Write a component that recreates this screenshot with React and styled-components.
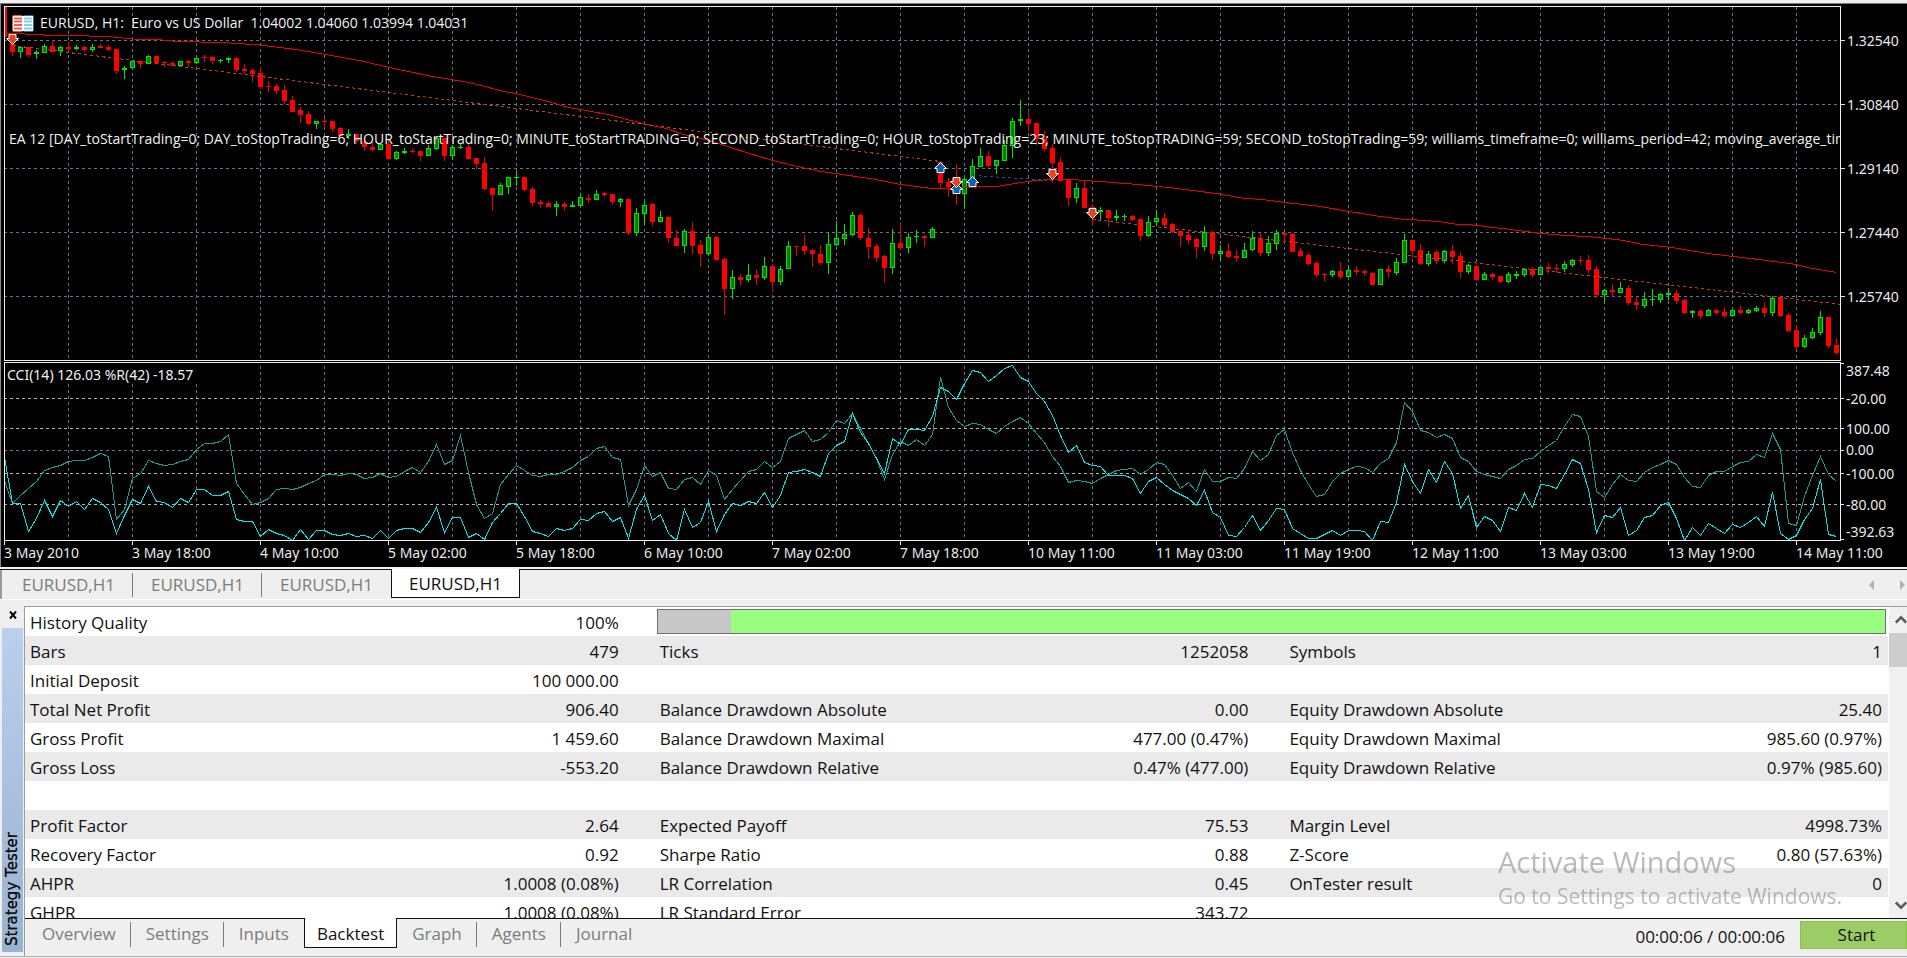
import React from "react";
import styled, { createGlobalStyle, css } from "styled-components";

const UI_FONT = '"Open Sans", "Noto Sans", sans-serif';
const CHART_FONT = '"Noto Sans", "Open Sans", sans-serif';

const GlobalStyle = createGlobalStyle`
  * { box-sizing: border-box; }
  body { margin: 0; background: #efefef; overflow: hidden; }
`;

/* ---------- chart data ---------- */

const STEP = 8;
const SUB = 3;

/* colour, high, body top, body bottom, low, in thirds of a pixel */
const CANDLES = `R 18 18 110 112|R 108 133 155 167|G 141 142 155 173|R 141 141 165 171|G 150 157 163 176|G 132 139 158 160|R 120 139 155 157|G 137 142 153 167
R 126 141 147 152|G 135 141 146 150|R 137 141 150 155|G 132 142 149 155|R 132 138 143 145|R 135 141 149 153|R 147 147 212 222|G 198 203 211 236
G 182 184 203 206|R 182 184 191 203|G 165 169 191 193|R 168 168 189 190|R 182 187 190 200|R 183 189 195 198|G 182 184 197 198|R 179 183 189 201
G 170 173 188 191|R 165 171 174 185|R 168 171 183 191|G 177 180 183 188|G 171 175 180 188|R 171 174 210 215|R 192 206 213 221|R 207 210 221 245
R 201 219 261 266|R 244 258 261 275|R 252 258 272 281|R 255 270 303 311|R 288 300 335 336|R 321 330 345 369|R 333 342 372 374|G 363 364 371 386
R 354 363 366 377|R 363 363 387 395|R 381 384 408 411|G 387 402 408 417|R 402 402 423 431|R 422 425 441 453|R 425 441 450 453|G 430 433 449 451
R 419 432 477 479|G 453 457 476 480|G 444 453 458 461|R 444 453 456 459|R 453 453 467 482|G 435 445 467 468|G 411 415 446 450|R 413 414 467 482
G 435 441 467 476|G 432 440 443 446|R 432 441 477 479|R 474 474 492 507|R 471 489 567 570|R 564 564 585 633|G 549 555 584 585|G 531 532 560 581
G 516 531 534 557|R 531 531 570 572|R 562 567 609 618|R 600 606 611 624|R 603 609 621 621|G 603 613 620 648|R 605 611 621 633|G 603 614 620 621
G 579 591 617 618|R 582 594 600 609|G 570 583 599 600|R 575 578 584 591|R 582 582 605 614|G 594 598 605 621|R 597 597 699 706|G 624 640 698 707
G 603 616 641 668|R 609 612 666 677|G 633 652 665 666|R 648 651 713 729|R 690 714 738 738|G 687 693 737 759|R 666 693 738 762|R 720 735 762 801
G 702 712 761 764|R 708 711 779 783|R 774 777 867 945|G 810 832 866 897|R 822 831 840 857|G 792 826 839 845|R 807 825 834 855|G 771 799 833 839
R 792 798 845 875|G 798 808 845 855|G 723 739 806 806|R 738 738 741 768|R 705 738 753 765|R 747 750 762 801|R 735 762 789 795|G 699 733 788 822
G 663 714 734 738|G 672 703 716 735|G 636 646 704 707|R 639 645 713 720|R 684 714 741 777|R 732 738 773 785|R 765 768 803 849|G 687 730 803 822
R 666 729 743 747|G 699 712 743 759|G 690 708 712 729|R 705 708 713 741|G 682 688 713 714|R 483 486 549 566|R 534 546 560 591|R 492 534 580 615
G 534 538 581 627|G 477 499 536 540|G 444 468 500 501|R 453 468 497 501|G 480 481 497 521|G 420 436 482 483|G 354 364 437 474|G 300 358 364 378
R 330 357 372 392|R 369 369 417 435|R 393 414 447 453|R 432 444 489 549|R 471 486 543 546|R 540 540 594 618|G 549 564 593 609|R 541 564 624 624
R 612 621 654 678|G 621 630 635 660|R 630 630 654 681|G 630 649 653 662|G 642 648 651 662|R 645 648 660 663|R 657 657 707 723|G 648 667 707 711
G 630 655 667 678|R 639 654 675 683|R 669 672 696 699|R 693 693 707 741|R 690 705 719 731|R 714 717 741 774|G 678 697 740 753|R 693 696 761 779
G 735 754 761 782|R 729 753 771 774|R 750 767 774 786|G 730 751 773 774|G 693 714 751 753|R 699 714 759 768|G 708 730 758 768|G 690 699 731 750
R 696 699 704 728|R 699 702 755 756|R 744 753 767 771|R 759 765 791 797|R 783 789 825 831|R 819 822 825 843|G 810 814 824 830|R 786 813 831 837
G 798 811 830 832|R 798 810 815 825|R 810 813 819 828|R 816 819 855 855|G 807 808 854 855|R 795 807 816 833|G 774 787 818 825|G 702 721 788 790
R 720 720 752 773|R 732 750 792 795|G 753 763 791 797|R 750 756 782 792|G 750 754 782 789|R 735 753 770 792|R 756 768 815 833|G 792 796 815 822
R 795 798 839 843|G 816 823 839 840|R 820 822 831 839|R 827 828 846 849|G 816 823 845 849|G 813 822 827 837|G 804 808 824 830|R 801 807 825 831
G 801 802 824 825|R 789 801 806 818|R 792 803 806 815|G 783 793 806 815|G 777 781 794 801|R 768 780 783 795|R 765 780 809 822|R 798 807 885 893
G 867 871 884 906|R 852 870 876 891|G 846 865 878 879|R 855 864 909 915|R 891 906 915 930|G 876 898 917 923|G 867 897 900 917|G 879 882 899 909
G 864 880 885 899|R 870 879 903 911|R 897 900 939 942|G 930 934 938 954|R 927 933 947 957|G 927 931 947 948|R 928 930 939 945|R 921 936 947 953
G 930 931 947 950|R 915 930 939 945|G 927 931 938 942|G 918 924 933 936|R 906 924 939 951|G 888 895 938 948|R 887 891 947 951|R 939 945 993 996
R 978 990 1041 1050|G 1006 1015 1040 1044|G 984 997 1014 1018|G 933 952 998 1005|R 951 951 1038 1044|R 1014 1035 1059 1065`
  .split(/[|\n]/)
  .map((row) => {
    const [tone, ...levels] = row.trim().split(" ");
    const [high, top, bottom, low] = levels.map((v) => Math.round(Number(v) / SUB));
    return { tone, high, top, bottom, low };
  });

/* one reading per bar, in thirds of a pixel */
const CCI = [
  380, 444, 420, 400, 377, 345, 335, 331, 319, 316, 316, 307, 295, 304, 493, 462, 370, 355, 316, 325, 331, 328, 319, 313,
  283, 265, 265, 257, 238, 385, 417, 447, 441, 428, 401, 398, 401, 397, 385, 376, 358, 358, 361, 355, 358, 368, 365, 355,
  367, 364, 347, 337, 352, 319, 268, 327, 314, 241, 350, 447, 490, 475, 388, 357, 331, 344, 360, 364, 358, 358, 349, 337,
  314, 304, 278, 273, 306, 311, 451, 403, 329, 363, 350, 399, 403, 371, 367, 388, 344, 360, 432, 401, 375, 347, 343, 317,
  336, 317, 250, 238, 226, 257, 252, 231, 194, 203, 175, 220, 265, 310, 373, 298, 258, 271, 253, 271, 238, 67, 157, 196,
  213, 203, 206, 222, 235, 214, 198, 187, 204, 235, 260, 303, 333, 382, 376, 379, 384, 368, 358, 346, 341, 338, 357, 341,
  320, 328, 361, 400, 382, 408, 341, 379, 379, 365, 370, 338, 289, 316, 298, 241, 221, 290, 344, 388, 424, 417, 377, 355,
  343, 334, 335, 352, 325, 310, 262, 140, 169, 225, 232, 247, 238, 248, 306, 317, 349, 358, 362, 370, 343, 330, 311, 310,
  289, 270, 256, 212, 178, 182, 243, 409, 426, 388, 358, 376, 379, 352, 337, 327, 316, 328, 367, 394, 397, 361, 349, 349,
  334, 320, 319, 298, 306, 235, 283, 505, 511, 424, 361, 302, 358, 377,
];

const WILLIAMS = [
  316, 445, 445, 529, 489, 434, 483, 436, 453, 439, 462, 430, 441, 461, 535, 481, 433, 445, 392, 438, 442, 456, 430, 441,
  403, 403, 421, 421, 407, 493, 498, 499, 542, 523, 535, 541, 555, 523, 553, 526, 526, 538, 541, 535, 544, 541, 550, 526,
  549, 526, 520, 520, 532, 501, 455, 532, 487, 487, 545, 535, 552, 502, 473, 445, 445, 484, 528, 535, 544, 520, 526, 519,
  493, 496, 473, 469, 498, 486, 550, 463, 419, 496, 476, 535, 555, 463, 516, 502, 437, 528, 478, 445, 451, 439, 445, 412,
  456, 421, 350, 347, 341, 352, 363, 295, 271, 257, 173, 231, 265, 310, 355, 250, 267, 223, 223, 226, 184, 95, 108, 132,
  85, 46, 50, 79, 60, 38, 31, 66, 79, 115, 139, 179, 239, 291, 269, 321, 331, 332, 361, 361, 361, 370, 415, 378,
  367, 388, 406, 418, 428, 451, 406, 472, 487, 541, 544, 517, 479, 526, 496, 460, 463, 520, 535, 550, 550, 538, 526, 541,
  526, 526, 529, 555, 499, 502, 442, 328, 379, 413, 343, 381, 317, 355, 460, 421, 517, 484, 495, 529, 457, 465, 415, 457,
  388, 391, 400, 358, 313, 323, 403, 532, 479, 487, 457, 541, 526, 487, 481, 451, 442, 490, 555, 517, 541, 505, 520, 535,
  508, 517, 502, 484, 514, 412, 535, 552, 541, 493, 460, 373, 538, 544,
];

const MOVING_AVERAGE = [
  [20, 100], [75, 102], [150, 106], [240, 107], [340, 111], [400, 117], [485, 120], [530, 124], [675, 128], [780, 135],
  [890, 149], [975, 163], [1090, 184], [1165, 202], [1300, 230], [1350, 238], [1410, 248], [1510, 274], [1549, 281],
  [1650, 306], [1700, 321], [1740, 328], [1830, 345], [1930, 371], [2000, 386], [2050, 403], [2125, 421], [2200, 445],
  [2240, 458], [2317, 481], [2380, 497], [2460, 514], [2510, 521], [2625, 538], [2700, 553], [2790, 565], [2850, 565],
  [2910, 562], [3000, 558], [3060, 548], [3110, 541], [3150, 539], [3220, 539], [3320, 546], [3420, 554], [3470, 559],
  [3520, 564], [3660, 582], [3725, 594], [3790, 599], [3853, 607], [3950, 618], [4045, 634], [4130, 648], [4210, 658],
  [4250, 660], [4320, 665], [4370, 673], [4420, 675], [4520, 687], [4620, 700], [4680, 705], [4780, 711], [4870, 721],
  [4920, 732], [5020, 743], [5120, 760], [5280, 779], [5380, 792], [5430, 804], [5508, 817],
];

const VERTICALS = Array.from({ length: 28 }, (_, i) => 68 + i * 64);
const PRICES = ["1.32540", "1.30840", "1.29140", "1.27440", "1.25740"];
const DEALS = [
  { x: 12, y: 39, side: "sell" },
  { x: 940, y: 167, side: "buy" },
  { x: 956, y: 188, side: "buy" },
  { x: 956, y: 182, side: "sell" },
  { x: 972, y: 181, side: "buy" },
  { x: 1052, y: 174, side: "sell" },
  { x: 1092, y: 213, side: "sell" },
];
const LEVELS = [
  { y: 398, tone: "#b4b4b4" },
  { y: 428, tone: "#b4b4b4" },
  { y: 450, tone: "#62748a" },
  { y: 473, tone: "#b4b4b4" },
  { y: 504, tone: "#b4b4b4" },
];
const SCALE = [
  { y: 371, tick: 363, text: "387.48" },
  { y: 399, tick: 398, text: "-20.00" },
  { y: 429, tick: 428, text: "100.00" },
  { y: 450, tick: 450, text: "0.00" },
  { y: 474, tick: 473, text: "-100.00" },
  { y: 505, tick: 504, text: "-80.00" },
  { y: 532, tick: 539, text: "-392.63" },
];
const TIMES = [
  "3 May 2010", "3 May 18:00", "4 May 10:00", "5 May 02:00", "5 May 18:00", "6 May 10:00", "7 May 02:00", "7 May 18:00",
  "10 May 11:00", "11 May 03:00", "11 May 19:00", "12 May 11:00", "13 May 03:00", "13 May 19:00", "14 May 11:00",
];
const EA_PARAMETERS =
  "EA 12 [DAY_toStartTrading=0; DAY_toStopTrading=6; HOUR_toStartTrading=0; MINUTE_toStartTRADING=0; SECOND_toStartTrading=0; HOUR_toStopTrading=23; MINUTE_toStopTRADING=59; SECOND_toStopTrading=59; williams_timeframe=0; williams_period=42; moving_average_timeframe=0";

/* ---------- chart ---------- */

const ChartWindow = styled.section`
  flex: none;
  display: grid;
  grid-template-columns: minmax(0, 1fr) 66px;
  grid-template-rows: 355px 1px 179px 26px;
  margin-top: 3px;
  padding-top: 2px;
  padding-left: 4px;
  background: #000;
  border-top: 1px solid #7c7c7c;
  border-bottom: 2px solid #f4f4f4;
  box-shadow: inset 1px 0 #8a8a8a;
  overflow: hidden;
`;

const Pane = styled.div`
  position: relative;
  min-width: 0;
  overflow: hidden;
  border: 1px solid #f0f0f0;
  ${(p) => p.$lower && css`grid-row: 3;`}
`;

const Canvas = styled.svg`
  display: block;
  width: 100%;
  height: 100%;
`;

const Axis = styled.svg`
  display: block;
  width: 100%;
  height: 100%;
  overflow: visible;
  grid-row: ${(p) => p.$row};
  grid-column: ${(p) => (p.$wide ? "1 / 3" : "2")};
  font-family: ${CHART_FONT};
  font-size: 14px;
  fill: #e8e8e8;
`;

const Caption = styled.div`
  position: absolute;
  top: ${(p) => p.$top}px;
  left: ${(p) => p.$left}px;
  display: flex;
  align-items: center;
  gap: 6px;
  color: #f0f0f0;
  font-family: ${(p) => (p.$narrow ? UI_FONT : CHART_FONT)};
  font-size: 14px;
  line-height: 20px;
  white-space: pre;
`;

const GRID = "#62748a";

function Candle({ x, tone, high, top, bottom, low }) {
  const up = tone === "G";
  const height = Math.max(bottom - top, 1);
  return (
    <g>
      <rect x={x} y={high} width="1" height={Math.max(low - high, 1)} fill={up ? "#00e600" : "#e60000"} />
      <rect x={x - 2} y={top} width="5" height={height} fill={up ? "#00e600" : "#ff0000"} />
      {up && height > 2 && <rect x={x - 1} y={top + 1} width="3" height={height - 2} fill="#008000" />}
    </g>
  );
}

function Deal({ x, y, side }) {
  return (
    <path
      transform={`translate(${x + 0.5} ${y + 0.5})${side === "buy" ? " scale(1 -1)" : ""}`}
      d="M-3.5 -5H3.5V-1H6L0 5L-6 -1H-3.5Z"
      fill={side === "buy" ? "#0a64b4" : "#e8441f"}
      stroke="#fff"
      strokeWidth="1"
    />
  );
}

function QuoteIcon() {
  return (
    <svg width="22" height="17" viewBox="0 0 22 17" aria-hidden="true">
      <rect width="11" height="17" rx="2" fill="#e5504a" />
      <rect x="11" width="11" height="17" rx="2" fill="#1a72bd" />
      <rect x="1" y="1" width="10" height="15" fill="#fff" />
      <rect x="11" y="1" width="10" height="15" fill="#fff" />
      <path d="M2 3.5H10M2 6.5H10M2 10H10M2 13.5H10" stroke="#ee5a50" strokeWidth="2" />
      <path d="M12 3.5H20M12 6.5H20M12 10H20M12 13.5H20" stroke="#8fc8f5" strokeWidth="2" />
    </svg>
  );
}

const toPoints = (values) => values.map((v, i) => `${i === 0 ? 5 : 4.5 + i * STEP},${Math.round(v / SUB) + 355.5}`).join(" ");

function PriceChart() {
  return (
    <Pane>
      <Canvas role="img" aria-label="EURUSD H1 candlestick chart">
        <g transform="translate(-5 -7)" shapeRendering="crispEdges" fill="none">
          {VERTICALS.map((x) => (
            <line key={x} x1={x + 0.5} x2={x + 0.5} y1="7" y2="358" stroke={GRID} strokeDasharray="3 3" />
          ))}
          {PRICES.map((p, i) => (
            <line key={p} x1="4" x2="4000" y1={40.5 + i * 64} y2={40.5 + i * 64} stroke={GRID} strokeDasharray="3 3" />
          ))}
          {CANDLES.map((c, i) => (
            <Candle key={i} x={4 + i * STEP} {...c} />
          ))}
          <polyline points={MOVING_AVERAGE.map(([x, y]) => `${x / SUB},${y / SUB}`).join(" ")} stroke="#e60000" />
          <path d="M12.5 45.5L940.5 161.5M1092.5 219.5L1842 304.5" stroke="#c23c14" strokeDasharray="3 3" />
          <path d="M972.5 175.5L1052.5 180.5" stroke="#0a5aa0" strokeDasharray="3 3" />
          <g shapeRendering="auto">
            {DEALS.map((d, i) => (
              <Deal key={i} {...d} />
            ))}
          </g>
        </g>
      </Canvas>
      <Caption $top={6} $left={7} $narrow>
        <QuoteIcon />
        <span>EURUSD, H1:  Euro vs US Dollar  1.04002 1.04060 1.03994 1.04031</span>
      </Caption>
      <Caption $top={122} $left={4} $narrow>{EA_PARAMETERS}</Caption>
    </Pane>
  );
}

function IndicatorChart() {
  return (
    <Pane $lower>
      <Canvas role="img" aria-label="CCI and Williams percent range">
        <g transform="translate(-5 -363)" shapeRendering="crispEdges" fill="none">
          {VERTICALS.map((x) => (
            <line key={x} x1={x + 0.5} x2={x + 0.5} y1={x < 200 ? 384 : 366} y2="538" stroke={GRID} strokeDasharray="3 3" />
          ))}
          {LEVELS.map((l) => (
            <line key={l.y} x1="4" x2="4000" y1={l.y + 0.5} y2={l.y + 0.5} stroke={l.tone} strokeDasharray="3 3" />
          ))}
          <polyline points={toPoints(CCI)} stroke="#209890" />
          <polyline points={toPoints(WILLIAMS)} stroke="#00e6e6" />
        </g>
      </Canvas>
      <Caption $top={2} $left={2}>CCI(14) 126.03 %R(42) -18.57</Caption>
    </Pane>
  );
}

function Charts() {
  return (
    <ChartWindow>
      <PriceChart />
      <Axis $row={1}>
        {PRICES.map((p, i) => (
          <g key={p}>
            <rect x="-1" y={34 + i * 64} width="5" height="1" />
            <text x="6" y={40 + i * 64}>{p}</text>
          </g>
        ))}
      </Axis>
      <IndicatorChart />
      <Axis $row={3}>
        {SCALE.map((s) => (
          <g key={s.text}>
            <rect x="-1" y={s.tick - 362} width="4" height="1" />
            <text x="5" y={s.y - 357}>{s.text}</text>
          </g>
        ))}
      </Axis>
      <Axis $row={4} $wide>
        {TIMES.map((t, i) => (
          <g key={t}>
            <rect x={i * 128} y="0" width="1" height="4" />
            <text x={i * 128} y="17">{t}</text>
          </g>
        ))}
      </Axis>
    </ChartWindow>
  );
}

/* ---------- tabs ---------- */

const ChartTabs = styled.nav`
  flex: none;
  display: flex;
  height: 30px;
  padding-left: 4px;
  padding-right: 2px;
  border-top: 1px solid #111;
  box-shadow: inset 2px 0 #9a9a9a, 0 1px #fff;
`;

const Tab = styled.button`
  display: flex;
  align-items: center;
  justify-content: center;
  position: relative;
  height: ${(p) => p.$height}px;
  margin-top: -1px;
  padding: 2px 15px 0;
  border: 0;
  background: transparent;
  color: #7c7c7c;
  font-family: ${UI_FONT};
  font-size: 17px;
  line-height: 22px;

  &:not(:last-of-type)::after {
    content: "";
    position: absolute;
    right: 0;
    top: 4px;
    bottom: 1px;
    width: 1px;
    background: #7c7c7c;
  }

  ${(p) => p.$wide && css`width: 129px;`}
  ${(p) =>
    p.$active &&
    css`
      padding: 2px 12px 0;
      background: #fff;
      color: #111;
      border: 1px solid #111;
      border-top: 0;
      &&::after { display: none; }
    `}
  ${(p) => p.$plain && css`&&::after { display: none; }`}
`;

const TabArrows = styled.div`
  display: flex;
  align-items: center;
  gap: 26px;
  margin-left: auto;
`;

const ArrowButton = styled.button`
  display: flex;
  padding: 0;
  border: 0;
  background: transparent;
`;

const CHART_TABS = ["EURUSD,H1", "EURUSD,H1", "EURUSD,H1", "EURUSD,H1"];

/* ---------- strategy tester ---------- */

const Tester = styled.section`
  flex: 1;
  min-height: 0;
  display: flex;
  margin-top: 7px;
  margin-bottom: 1px;
  border-bottom: 1px solid #b0b0b0;
`;

const SideBar = styled.div`
  flex: none;
  display: flex;
  flex-direction: column;
  width: 24px;
  padding: 0 1px 4px 2px;
`;

const CloseButton = styled.button`
  display: flex;
  align-items: center;
  justify-content: center;
  height: 22px;
  padding: 0 0 4px;
  border: 0;
  background: transparent;
`;

const SideTitle = styled.h2`
  flex: 1;
  margin: 0;
  padding-top: 6px;
  writing-mode: vertical-rl;
  transform: rotate(180deg);
  background: linear-gradient(#98b2d2, #b9d0ee);
  color: #111;
  font-family: "DejaVu Sans", "Noto Sans", sans-serif;
  font-size: 15px;
  font-weight: 400;
  line-height: 21px;
  text-shadow: 0 0 #111;
`;

const TesterMain = styled.div`
  flex: 1;
  min-width: 0;
  display: flex;
  flex-direction: column;
  border-left: 1px solid #9c9c9c;
  border-top: 1px solid #9c9c9c;
`;

const Report = styled.div`
  flex: 1;
  min-height: 0;
  display: flex;
  background: #fff;
`;

const ReportView = styled.div`
  flex: 1;
  min-width: 0;
  overflow: hidden;
  padding-right: 1px;
`;

const Table = styled.table`
  width: 100%;
  table-layout: fixed;
  border-collapse: collapse;
  color: #111;
  font-family: ${UI_FONT};
  font-size: 17px;
  line-height: 27px;
`;

const Row = styled.tr`
  height: 29px;
  background: ${(p) => (p.$shaded ? "#eaeaea" : "#fff")};
`;

const Label = styled.th`
  padding: 2px 0 0 5px;
  font-weight: 400;
  text-align: left;
  white-space: nowrap;
`;

const Value = styled.td`
  padding: 2px ${(p) => (p.$last ? 6 : 36)}px 0 0;
  text-align: right;
  white-space: nowrap;
`;

const ProgressCell = styled.td`
  padding: 0 2px;
`;

const Progress = styled.div`
  height: 25px;
  border: 1px solid #6e6e6e;
  background: #98ff80;
`;

const ProgressMissing = styled.div`
  width: 6%;
  height: 100%;
  background: #c8c8c8;
`;

const ScrollBar = styled.div`
  flex: none;
  display: flex;
  flex-direction: column;
  width: 18px;
  background: #f0f0f0;
`;

const ScrollButton = styled.button`
  display: flex;
  align-items: center;
  height: 26px;
  padding: 0 0 0 6px;
  border: 0;
  background: transparent;
  overflow: hidden;
  margin-top: ${(p) => (p.$end ? "auto" : "0")};
`;

const ScrollThumb = styled.div`
  height: 34px;
  background: #cdcdcd;
`;

const Footer = styled.div`
  flex: none;
  display: flex;
  height: 38px;
  padding-left: 2px;
  border-top: 1px solid #111;
`;

const Elapsed = styled.output`
  margin: 6px 15px 0 auto;
  color: #111;
  font-family: ${UI_FONT};
  font-size: 17px;
  line-height: 24px;
`;

const StartButton = styled.button`
  width: 107px;
  height: 28px;
  margin-top: 2px;
  padding: 0 0 0 6px;
  border: 1px solid #8bc34a;
  background: #9ccc65;
  color: #111;
  font-family: ${UI_FONT};
  font-size: 17px;
  line-height: 22px;
`;

const Watermark = styled.div`
  position: fixed;
  right: 66px;
  bottom: 46px;
  width: 343px;
  color: rgba(120, 120, 120, 0.5);
  font-family: ${UI_FONT};
  pointer-events: none;
  white-space: nowrap;
`;

const WatermarkTitle = styled.div`
  font-size: 29px;
  line-height: 36px;
`;

const WatermarkText = styled.div`
  font-size: 21px;
  line-height: 32px;
`;

const ROWS = [
  ["Bars", "479", "Ticks", "1252058", "Symbols", "1"],
  ["Initial Deposit", "100 000.00", "", "", "", ""],
  ["Total Net Profit", "906.40", "Balance Drawdown Absolute", "0.00", "Equity Drawdown Absolute", "25.40"],
  ["Gross Profit", "1 459.60", "Balance Drawdown Maximal", "477.00 (0.47%)", "Equity Drawdown Maximal", "985.60 (0.97%)"],
  ["Gross Loss", "-553.20", "Balance Drawdown Relative", "0.47% (477.00)", "Equity Drawdown Relative", "0.97% (985.60)"],
  ["", "", "", "", "", ""],
  ["Profit Factor", "2.64", "Expected Payoff", "75.53", "Margin Level", "4998.73%"],
  ["Recovery Factor", "0.92", "Sharpe Ratio", "0.88", "Z-Score", "0.80 (57.63%)"],
  ["AHPR", "1.0008 (0.08%)", "LR Correlation", "0.45", "OnTester result", "0"],
  ["GHPR", "1.0008 (0.08%)", "LR Standard Error", "343.72", "", ""],
];

const TESTER_TABS = ["Overview", "Settings", "Inputs", "Backtest", "Graph", "Agents", "Journal"];

const Page = styled.main`
  display: flex;
  flex-direction: column;
  height: 100vh;
  background: #efefef;
`;

function Chevron({ down }) {
  return (
    <svg width="14" height="10" viewBox="0 0 14 10" aria-hidden="true">
      <path d={down ? "M1 2L7 8L13 2" : "M1 8L7 2L13 8"} fill="none" stroke="#5c5c5c" strokeWidth="3" />
    </svg>
  );
}

function StrategyTester() {
  return (
    <Tester>
      <SideBar>
        <CloseButton aria-label="Close">
          <svg width="8" height="8" viewBox="0 0 8 8"><path d="M1 0.5L7 7.5M7 0.5L1 7.5" stroke="#000" strokeWidth="2" /></svg>
        </CloseButton>
        <SideTitle>Strategy Tester</SideTitle>
      </SideBar>
      <TesterMain>
        <Report>
          <ReportView>
            <Table>
              <colgroup>
                <col width="13%" /><col width="20.8%" /><col width="16%" /><col width="17.8%" /><col width="16%" /><col />
              </colgroup>
              <tbody>
                <Row>
                  <Label scope="row">History Quality</Label>
                  <Value>100%</Value>
                  <ProgressCell colSpan={4}>
                    <Progress><ProgressMissing /></Progress>
                  </ProgressCell>
                </Row>
                {ROWS.map((r, i) => (
                  <Row key={i} $shaded={i % 2 === 0}>
                    <Label scope="row">{r[0]}</Label>
                    <Value>{r[1]}</Value>
                    <Label scope="row">{r[2]}</Label>
                    <Value>{r[3]}</Value>
                    <Label scope="row">{r[4]}</Label>
                    <Value $last>{r[5]}</Value>
                  </Row>
                ))}
              </tbody>
            </Table>
          </ReportView>
          <ScrollBar>
            <ScrollButton aria-label="Scroll up"><Chevron /></ScrollButton>
            <ScrollThumb />
            <ScrollButton $end aria-label="Scroll down"><Chevron down /></ScrollButton>
          </ScrollBar>
        </Report>
        <Footer>
          {TESTER_TABS.map((t) => (
            <Tab key={t} $height={30} $active={t === "Backtest"} $plain={t === "Inputs" || t === "Journal"}>{t}</Tab>
          ))}
          <Elapsed>00:00:06 / 00:00:06</Elapsed>
          <StartButton>Start</StartButton>
        </Footer>
      </TesterMain>
    </Tester>
  );
}

export default function App() {
  return (
    <Page>
      <GlobalStyle />
      <Charts />
      <ChartTabs>
        {CHART_TABS.map((t, i) => (
          <Tab key={i} $wide $height={29} $active={i === 3} $plain={i === 2}>{t}</Tab>
        ))}
        <TabArrows>
          <ArrowButton aria-label="Previous tab"><svg width="5" height="10"><path d="M5 0V10L0 5Z" fill="#b0b0b0" /></svg></ArrowButton>
          <ArrowButton aria-label="Next tab"><svg width="5" height="10"><path d="M0 0V10L5 5Z" fill="#b0b0b0" /></svg></ArrowButton>
        </TabArrows>
      </ChartTabs>
      <StrategyTester />
      <Watermark>
        <WatermarkTitle>Activate Windows</WatermarkTitle>
        <WatermarkText>Go to Settings to activate Windows.</WatermarkText>
      </Watermark>
    </Page>
  );
}
